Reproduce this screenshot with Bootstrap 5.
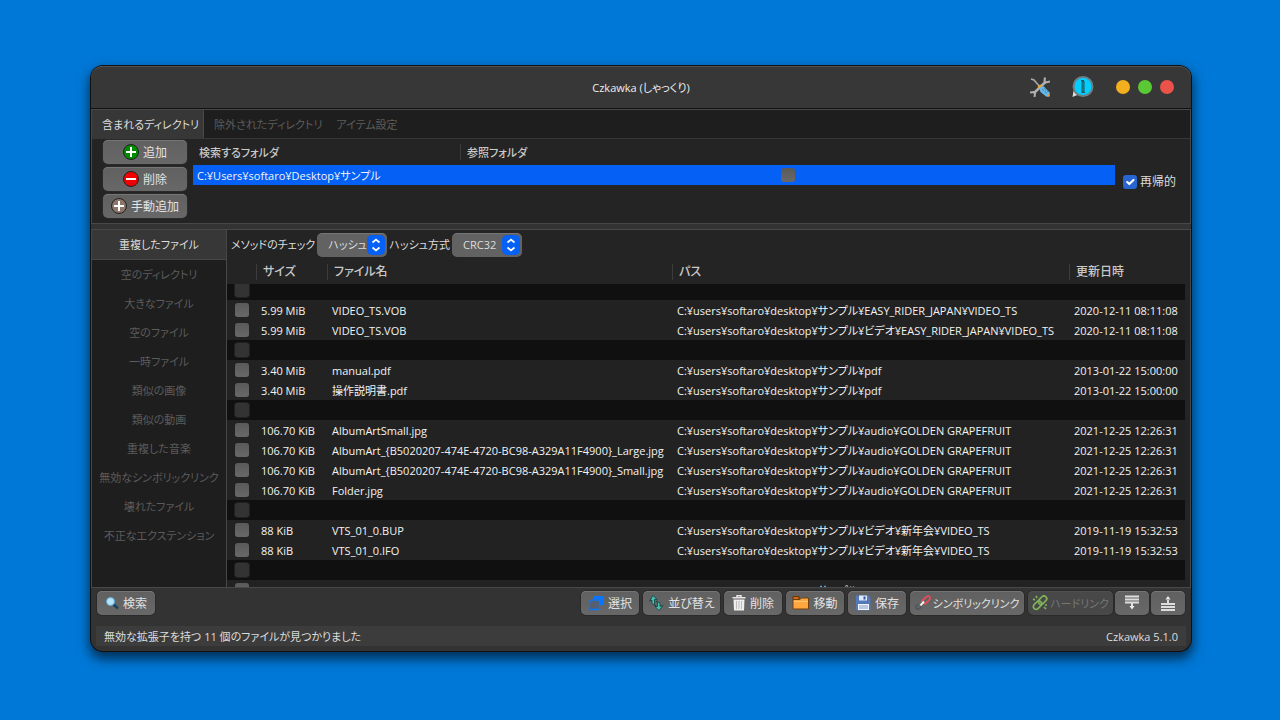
<!DOCTYPE html>
<html lang="ja">
<head>
<meta charset="utf-8">
<meta name="viewport" content="width=device-width, initial-scale=1">
<title>Czkawka (しゃっくり)</title>
<link href="https://cdn.jsdelivr.net/npm/bootstrap@5.3.0/dist/css/bootstrap.min.css" rel="stylesheet">
<style>
  body { background: #0078d7; font: 11px/20px "Open Sans", "Noto Sans CJK JP", sans-serif; font-feature-settings: "palt"; color: #ddd; padding: 66px 89px 69px 91px; }
  .app-window { background: #333; border-radius: 12px; box-shadow: 0 0 0 1px #111, 0 6px 12px 2px rgba(0,0,0,.6), inset 0 1px 0 #555; min-height: 0; }
  .title-bar { height: 42px; background: #373737; border-radius: 12px 12px 0 0; border-top: 1px solid #505050; position: relative; color: #eee; }
  .title-tools { right: 17px; top: 0; height: 40px; gap: 22px; }
  .tool-btn { background: none; border: 0; padding: 0; line-height: 0; }
  .dot { width: 14px; height: 14px; border-radius: 50%; border: 0; padding: 0; }
  .dot-min { background: #f2b01e; } .dot-max { background: #5bc936; } .dot-close { background: #ea524a; }
  .dots { gap: 8px; }
  .pane { background: #242424; border: 1px solid #484848; }
  .title-line { border-top: 1px solid #111; }
  .tab-strip { background: #1e1e1e; border-bottom: 1px solid #373737; height: 29px; }
  .tab-strip .nav-link, .side-tabs .nav-link { color: #5c5c5c; border-radius: 0; padding: 0 4px 0 10px; line-height: 29px; }
  .tab-strip .nav-link.active { background: #373737; color: #ddd; border-right: 1px solid #484848; height: 28px; }
  .dir-body { padding: 1px 14px 0 11px; height: 84px; }
  .dir-buttons { gap: 3px; margin-right: 6px; }
  .recursive { gap: 3px; font-size: 12px; }
  .g-btn { height: 24px; background: linear-gradient(#606060, #686868); color: #e2e2e2; border: 0; border-radius: 5px; box-shadow: inset 0 1px 0 #757575, 0 0 0 1px #2a2a2a; font: inherit; font-size: 12px; line-height: 20px; padding: 0; display: inline-flex; align-items: center; justify-content: center; gap: 4px; white-space: nowrap; }
  .g-btn:disabled { background: #484848; color: #777; box-shadow: inset 0 1px 0 #505050, 0 0 0 1px #2a2a2a; opacity: 1; }
  .g-btn svg, .tool-btn svg { flex: none; }
  .g-btn span { padding-top: 2px; }
  .w-dir { width: 84px; }
  .w-act { width: 58px; }
  .w-sort { width: 77px; }
  .w-sym { width: 114px; gap: 2px; font-size: 11px; }
  .w-hard { width: 85px; gap: 2px; font-size: 11px; }
  .w-sq { width: 34px; }
  .data { width: 100%; table-layout: fixed; border-collapse: separate; border-spacing: 0; white-space: nowrap; }
  .data th { font-weight: 500; font-size: 12px; color: #c8c8c8; height: 24px; padding: 0 0 0 7px; line-height: 20px; background: linear-gradient(#3c3c3c, #3c3c3c) left 4px / 1px 16px no-repeat #242424; }
  .data th:first-child { background-image: none; }
  .data td { height: 20px; padding: 1px 0 0 5px; line-height: 19px; color: #f2f2f2; overflow: hidden; background: #222; }
  .data .gap-row td { background: #101010; }
  .dirs th { height: 25px; font-size: 11px; padding-top: 1px; }
  .dirs th:first-child { padding-left: 6px; }
  .dirs td { background: #0560f5; padding-left: 4px; }
  .dirs .col-folder { width: 267px; }
  .results thead th { position: sticky; top: 0; z-index: 1; }
  .data .form-check-input { display: block; margin: 0 auto; background-image: linear-gradient(#5a5a5a, #686868); }
  .results td:first-child { padding: 0 0 0 1px; }
  .dirs td.ref { padding: 0; }
  .col-tick { width: 29px; } .col-size { width: 71px; } .col-file { width: 345px; } .col-date { width: 116px; }
  .form-check-input { width: 14px; height: 14px; margin: 0; float: none; background-color: #606060; border: 0; border-radius: 3px; vertical-align: middle; }
  .form-check-input:checked { background-color: #2865d0; }
  .data .gap-row .form-check-input { background: #333; box-shadow: 0 0 0 1px #202020; opacity: 1; }
  .result-scroll { overflow: hidden; min-height: 0; flex: 1 1 0; margin-right: 5px; }
  .splitter { height: 5px; background: #333; }
  .side-tabs { width: 135px; background: #1e1e1e; border-right: 1px solid #484848; }
  .side-tabs .nav-link { padding: 0; height: 29px; line-height: 30px; text-align: center; white-space: nowrap; }
  .side-tabs .nav-link.active { height: 30px; background: #373737; color: #ddd; border-bottom: 1px solid #484848; }
  .options { height: 30px; gap: 2px; padding-left: 4px; }
  .combo { appearance: none; -webkit-appearance: none; height: 24px; width: 70px; padding: 0 0 0 11px; border: 0; border-radius: 5px; color: #ddd; font: inherit; box-shadow: inset 0 1px 0 #757575;
    background: url("data:image/svg+xml,%3Csvg xmlns='http://www.w3.org/2000/svg' width='18' height='20'%3E%3Crect width='18' height='20' rx='5' fill='%230560f5'/%3E%3Cpath d='M5.5 7.5 9 4.5l3.500 3M5.500 12.500 9 15.500l3.500-3' fill='none' stroke='%23fff' stroke-width='1.700'/%3E%3C/svg%3E") right 2px center no-repeat #626262; }
  .action-bar { padding: 3px 6px 0 6px; height: 38px; }
  .actions { gap: 4px; }
  .tight { gap: 2px; }
  .status { background: #3c3c3c; margin: 0 5px 5px; padding: 1px 8px 0; height: 20px; }
</style>
</head>
<body class="vh-100 d-flex flex-column">
<main class="app-window d-flex flex-column flex-grow-1">
  <header class="title-bar d-flex align-items-center justify-content-center">
    <span>Czkawka (しゃっくり)</span>
    <div class="title-tools position-absolute d-flex align-items-center">
      <button class="tool-btn" type="button" aria-label="設定">
        <svg width="20" height="20" viewBox="0 0 20 20"><path d="M1 2l3 1 6 7" fill="none" stroke="#aaa" stroke-width="1.500"/><path d="M4 16 16 4.500" stroke="#b0b0b0" stroke-width="2.500"/><path d="M15 .5l-.5 3.500 1.500 1.500 4-1M0 15.500l3.500-.5 1.500 1.500-.5 3.500" fill="none" stroke="#b0b0b0" stroke-width="2"/><path d="M7.500 10l2.500-2.500 2 1.500-2.500 2.500z" fill="#f5a623"/><path d="M9.500 11.500l1.500-2 3 0 5.500 6v4h-3.500l-5.500-4.500z" fill="#69b7e6"/><path d="M12 12l5 4.500M14 11l4 4" stroke="#286f9d" stroke-dasharray="1 1"/><path d="M16.500 19.500l3-3.500v3.500z" fill="#e9a33a"/></svg>
      </button>
      <button class="tool-btn" type="button" aria-label="情報">
        <svg width="22" height="22" viewBox="0 0 22 22"><path d="M.5 21l1-6 5 3.500z" fill="#ddd"/><circle cx="11" cy="10.500" r="9.500" fill="#00cfff" stroke="#6c8089" stroke-width="2"/><path d="M10 5h2v11h-2z" fill="#168fac" stroke="#25565f"/><path d="M9 4.500h3M9.500 16.500h3.500" stroke="#25565f"/></svg>
      </button>
      <div class="dots d-flex">
        <button class="dot dot-min" type="button" aria-label="最小化"></button>
        <button class="dot dot-max" type="button" aria-label="最大化"></button>
        <button class="dot dot-close" type="button" aria-label="閉じる"></button>
      </div>
    </div>
  </header>
  <div class="title-line"></div>

  <section class="pane">
    <nav class="nav tab-strip flex-nowrap">
      <a class="nav-link active" href="#">含まれるディレクトリ</a>
      <a class="nav-link" href="#">除外されたディレクトリ</a>
      <a class="nav-link" href="#">アイテム設定</a>
    </nav>
    <div class="dir-body d-flex">
      <div class="dir-buttons d-flex flex-column">
        <button class="g-btn w-dir" type="button"><svg width="16" height="16" viewBox="0 0 16 16"><circle cx="8" cy="8" r="7.500" fill="#008a00" stroke="#222"/><path d="M8 3v10M3 8h10" stroke="#fff" stroke-width="2"/></svg><span>追加</span></button>
        <button class="g-btn w-dir" type="button"><svg width="16" height="16" viewBox="0 0 16 16"><circle cx="8" cy="8" r="7.500" fill="#f00000" stroke="#222"/><path d="M3 8h10" stroke="#fff" stroke-width="2"/></svg><span>削除</span></button>
        <button class="g-btn w-dir" type="button"><svg width="16" height="16" viewBox="0 0 16 16"><circle cx="8" cy="8" r="7.500" fill="#8d7468" stroke="#222"/><path d="M8 3v10M3 8h10" stroke="#fff" stroke-width="2"/></svg><span>手動追加</span></button>
      </div>
      <div class="flex-grow-1 me-2">
        <table class="data dirs">
          <thead><tr><th class="col-folder">検索するフォルダ</th><th>参照フォルダ</th></tr></thead>
          <tbody><tr><td>C:¥Users¥softaro¥Desktop¥サンプル</td><td class="ref"><input class="form-check-input" type="checkbox" aria-label="参照フォルダ"></td></tr></tbody>
        </table>
      </div>
      <div class="recursive d-flex align-items-center text-nowrap">
        <input class="form-check-input" id="recursive" type="checkbox" checked><label for="recursive">再帰的</label>
      </div>
    </div>
  </section>
  <div class="splitter"></div>

  <section class="pane d-flex flex-grow-1 overflow-hidden">
    <nav class="nav side-tabs flex-column flex-nowrap flex-shrink-0">
      <a class="nav-link active" href="#">重複したファイル</a>
      <a class="nav-link" href="#">空のディレクトリ</a>
      <a class="nav-link" href="#">大きなファイル</a>
      <a class="nav-link" href="#">空のファイル</a>
      <a class="nav-link" href="#">一時ファイル</a>
      <a class="nav-link" href="#">類似の画像</a>
      <a class="nav-link" href="#">類似の動画</a>
      <a class="nav-link" href="#">重複した音楽</a>
      <a class="nav-link" href="#">無効なシンボリックリンク</a>
      <a class="nav-link" href="#">壊れたファイル</a>
      <a class="nav-link" href="#">不正なエクステンション</a>
    </nav>
    <div class="d-flex flex-column flex-grow-1">
      <div class="options d-flex align-items-center">
        <label for="check-method">メソッドのチェック</label>
        <select class="combo" id="check-method"><option>ハッシュ</option></select>
        <label for="hash-type">ハッシュ方式</label>
        <select class="combo" id="hash-type"><option>CRC32</option></select>
      </div>
      <div class="result-scroll" id="results">
        <table class="data results">
          <thead><tr><th class="col-tick"></th><th class="col-size">サイズ</th><th class="col-file">ファイル名</th><th>パス</th><th class="col-date">更新日時</th></tr></thead>
          <tbody id="rows"></tbody>
        </table>
      </div>
    </div>
  </section>

  <div class="action-bar d-flex justify-content-between align-items-start">
    <button class="g-btn w-act" type="button"><svg width="14" height="14" viewBox="0 0 14 14"><path d="M8 8l5 4.500" stroke="#15445f" stroke-width="2.500"/><circle cx="5.500" cy="5.500" r="4" fill="#b5e4fb" stroke="#58abd9"/></svg><span>検索</span></button>
    <div class="actions d-flex">
      <button class="g-btn w-act" type="button"><svg width="16" height="16" viewBox="0 0 16 16"><path d="M6 1h9v9h-3V4H5z" fill="#0876ff"/><path d="M3.500 5h8v8l-2 1.500h-8V6.500z" fill="#565f70" stroke="#0876ff" stroke-width="1.300"/></svg><span>選択</span></button>
      <button class="g-btn w-sort" type="button"><svg width="16" height="16" viewBox="0 0 16 16"><g fill="#45c2b1" stroke="#143e3b" stroke-width=".8"><path d="M5 .5l4 4H6.500v5L8 11 4 8.500V5L1.500 6z"/><path d="M11 15.500L7 11.500h2.500v-4L8 6l4 2v3.500l3-1z"/></g></svg><span>並び替え</span></button>
      <button class="g-btn w-act" type="button"><svg width="14" height="16" viewBox="0 0 14 16"><path d="M5 2V.7h4V2M.5 2.700h13" fill="none" stroke="#e6e6e6" stroke-width="1.500"/><path d="M1.500 4.500h11L12 15.500H2z" fill="#eee"/><path d="M4.500 6v8M7 6v8M9.500 6v8" stroke="#bbb"/></svg><span>削除</span></button>
      <button class="g-btn w-act" type="button"><svg width="17" height="16" viewBox="0 0 17 16"><path d="M1 1.500h6v3H1z" fill="#d46a15" stroke="#6b3306"/><path d="M1 4.500h7l1.500-1.500h7v11H1z" fill="#ffa63e" stroke="#71400f"/><path d="M2 6.500h14" stroke="#ffc77c"/></svg><span>移動</span></button>
      <button class="g-btn w-act" type="button"><svg width="16" height="16" viewBox="0 0 16 16"><path d="M1 .5h12.500L15.500 3v12.500H1z" fill="#5578b9"/><path d="M4 .5h8v5H4z" fill="#dce8fa"/><path d="M8.500 1.500h2v3h-2z" fill="#355795"/><path d="M3 9h11v6H3z" fill="#f3f5fa"/><path d="M4 11h9M4 13h9" stroke="#7e9bc9"/></svg><span>保存</span></button>
      <button class="g-btn w-sym" type="button"><svg width="16" height="16" viewBox="0 0 16 16"><g fill="none" stroke-width="1.800"><path d="M6.500 6.500l4.500-4.500q3-2 4 .5.300 1.500-1 2.700l-3 3q-2 1-3.500-.5" stroke="#e64c58"/><path d="M8.500 9l-4 4.500q-2 1.500-3.500-.5-.5-1.500 1-2.700l1.500-1.500" stroke="#50565e"/></g><path d="M5.500 10.500L9 6.500" stroke="#eee" stroke-width="2"/></svg><span>シンボリックリンク</span></button>
      <div class="tight d-flex">
        <button class="g-btn w-hard" type="button" disabled><svg width="16" height="16" viewBox="0 0 16 16"><g fill="none" stroke="#7fb35c" stroke-width="1.700"><rect x="6" y="2.500" width="9.500" height="5.500" rx="2.700" transform="rotate(-45 10.500 5.500)"/><rect x="1" y="7.500" width="9.500" height="5.500" rx="2.700" transform="rotate(-45 5.500 10.500)"/><path d="M1 4l2 1M4 1l1 2M12 12l2 2M13 10h2"/></g></svg><span>ハードリンク</span></button>
        <button class="g-btn w-sq" type="button" aria-label="下へ"><svg width="14" height="16" viewBox="0 0 14 16"><path d="M0 1.500h14M0 4.500h14M0 7.500h14" stroke="#ddd" stroke-width="2"/><path d="M7 8v3" stroke="#ddd" stroke-width="2"/><path d="M4.500 11h5L7 14.500z" fill="#eee"/></svg></button>
        <button class="g-btn w-sq" type="button" aria-label="上へ"><svg width="14" height="16" viewBox="0 0 14 16"><path d="M0 9h14M0 12h14M0 15h14" stroke="#ddd" stroke-width="2"/><path d="M7 5v3" stroke="#ddd" stroke-width="2"/><path d="M4.500 4.500h5L7 1z" fill="#eee"/></svg></button>
      </div>
    </div>
  </div>
  <footer class="status d-flex justify-content-between align-items-center"><span>無効な拡張子を持つ 11 個のファイルが見つかりました</span><span>Czkawka 5.1.0</span></footer>
</main>
<script src="https://cdn.jsdelivr.net/npm/bootstrap@5.3.0/dist/js/bootstrap.bundle.min.js"></script>
<script>
  // Duplicate groups; each group is preceded by an empty header row.
  const root = 'C:¥users¥softaro¥desktop¥サンプル¥';
  const groups = [
    [['5.99 MiB', 'VIDEO_TS.VOB', 'EASY_RIDER_JAPAN¥VIDEO_TS', '2020-12-11 08:11:08'],
     ['5.99 MiB', 'VIDEO_TS.VOB', 'ビデオ¥EASY_RIDER_JAPAN¥VIDEO_TS', '2020-12-11 08:11:08']],
    [['3.40 MiB', 'manual.pdf', 'pdf', '2013-01-22 15:00:00'],
     ['3.40 MiB', '操作説明書.pdf', 'pdf', '2013-01-22 15:00:00']],
    ['AlbumArtSmall.jpg', 'AlbumArt_{B5020207-474E-4720-BC98-A329A11F4900}_Large.jpg', 'AlbumArt_{B5020207-474E-4720-BC98-A329A11F4900}_Small.jpg', 'Folder.jpg']
      .map(f => ['106.70 KiB', f, 'audio¥GOLDEN GRAPEFRUIT', '2021-12-25 12:26:31']),
    [['88 KiB', 'VTS_01_0.BUP', 'ビデオ¥新年会¥VIDEO_TS', '2019-11-19 15:32:53'],
     ['88 KiB', 'VTS_01_0.IFO', 'ビデオ¥新年会¥VIDEO_TS', '2019-11-19 15:32:53']],
    [['56 KiB', 'VTS_01_0.BUP', 'EASY_RIDER_JAPAN¥VIDEO_TS', '']]
  ];
  const tick = off => `<input class="form-check-input" type="checkbox" aria-label="選択"${off ? ' disabled' : ''}>`;
  document.getElementById('rows').innerHTML = groups.map(g =>
    `<tr class="gap-row"><td>${tick(true)}</td><td colspan="4"></td></tr>` +
    g.map(([size, file, path, date]) => `<tr><td>${tick(false)}</td><td>${size}</td><td>${file}</td><td>${root}${path}</td><td>${date}</td></tr>`).join('')
  ).join('');
  document.getElementById('results').scrollTop = 4;
</script>
</body>
</html>
